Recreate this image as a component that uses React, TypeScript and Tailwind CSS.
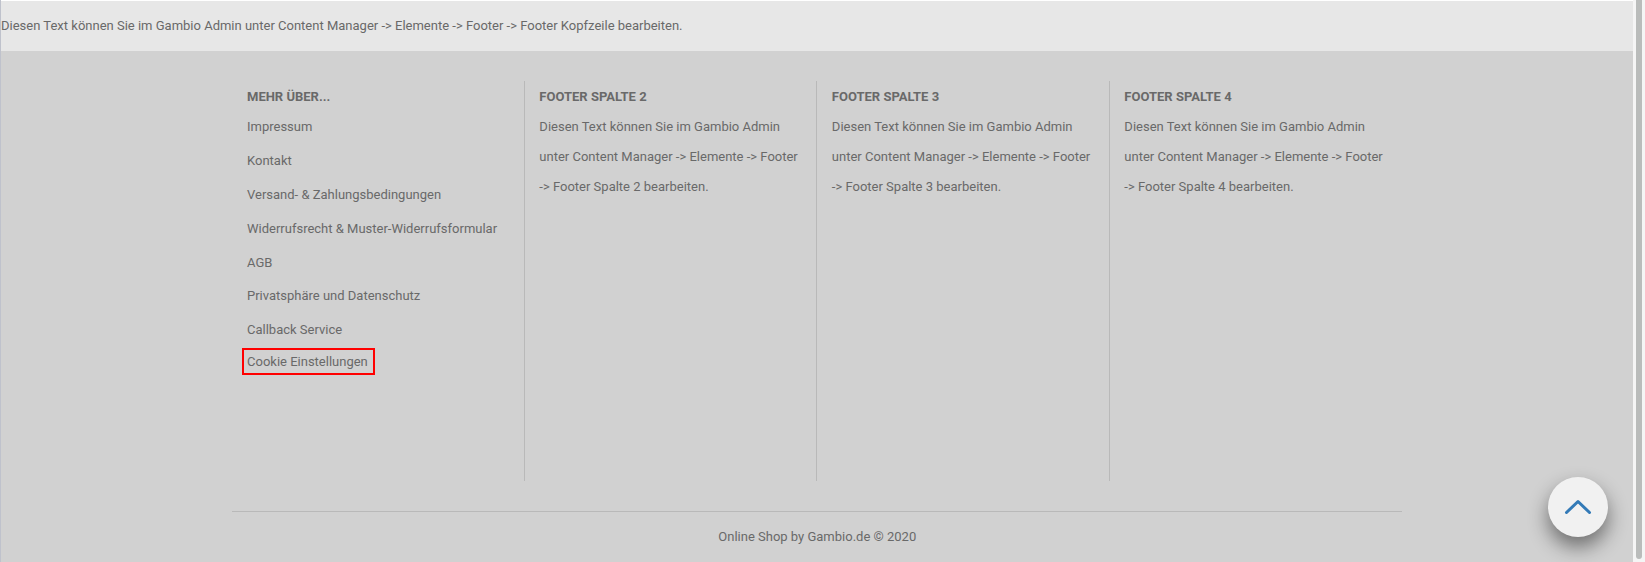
const links = [
  'Impressum', 'Kontakt', 'Versand- & Zahlungsbedingungen', 'Widerrufsrecht & Muster-Widerrufsformular',
  'AGB', 'Privatsphäre und Datenschutz', 'Callback Service',
];

export default function App() {
  return (
    <div className="flex h-[562px] w-full overflow-hidden bg-[#f5f5f5] font-['Roboto',sans-serif] text-[13px] text-[#696969]">
      <div className="relative flex w-[1633px] flex-col border-l border-[#bfc2cc] bg-[#d1d1d1]">
        <header className="flex h-[51px] items-center border-t border-t-white bg-[#e7e7e7] pb-px">
          Diesen Text können Sie im Gambio Admin unter Content Manager -&gt; Elemente -&gt; Footer -&gt; Footer Kopfzeile bearbeiten.
        </header>
        <main className="mx-auto mt-[30px] grid h-[400px] w-[1170px] grid-cols-4">
          <section className="px-[15px] pt-[8px]">
            <h4 className="h-[15px] font-bold leading-[15px]">MEHR ÜBER...</h4>
            <ul className="mt-[6px]">
              {links.map((l) => (
                <li key={l} className="h-[33.89px] whitespace-nowrap leading-[34px]">{l}</li>
              ))}
            </ul>
            <span className="-ml-[5px] mt-[0.77px] flex h-[27px] w-[133px] items-center border-2 border-[#ff0000] pl-[3px]">Cookie Einstellungen</span>
          </section>
          {[2, 3, 4].map((n) => (
            <section key={n} className="-ml-px border-l border-[#b9b9b9] pl-[14.85px] pt-[8px]">
              <h4 className="h-[15px] font-bold leading-[15px]">FOOTER SPALTE {n}</h4>
              <p className="mt-[8px] whitespace-nowrap leading-[30px]">
                Diesen Text können Sie im Gambio Admin<br />
                unter Content Manager -&gt; Elemente -&gt; Footer<br />
                -&gt; Footer Spalte {n} bearbeiten.
              </p>
            </section>
          ))}
        </main>
        <footer className="mx-auto mt-[30px] w-[1170px] border-t border-[#b9b9b9] pl-[0.5px] pt-[10px] text-center leading-[30px]">
          Online Shop by Gambio.de © 2020
        </footer>
        <button aria-label="Nach oben" className="absolute left-[1547px] top-[477px] flex size-[60px] items-center justify-center rounded-full bg-[#f1f1f1] shadow-[0_10px_20px_rgba(0,0,0,0.48)]">
          <svg width="28" height="16" viewBox="0 0 28 16" fill="none" stroke="#337ab7" strokeWidth="3" strokeLinecap="round" strokeLinejoin="round"><path d="M2.5 13.5 14 2.5l11.5 11" /></svg>
        </button>
      </div>
      <div className="ml-[3px] h-[559px] w-[6px] rounded-b-full bg-[#babcbb]" />
    </div>
  );
}
